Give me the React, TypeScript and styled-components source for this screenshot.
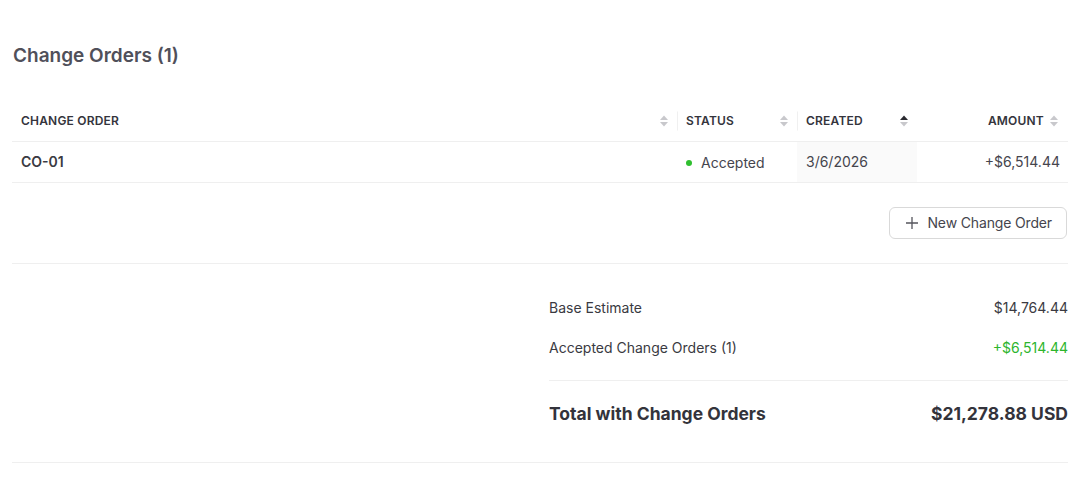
import styled, { createGlobalStyle } from "styled-components";

const GlobalStyle = createGlobalStyle`
  body {
    margin: 0;
    background: #ffffff;
    font-family: Inter, "Noto Sans", "Liberation Sans", sans-serif;
    color: #3a3a44;
  }
`;

const Page = styled.div`
  width: 1082px;
  box-sizing: border-box;
  padding: 42px 14px 0 12px;
`;

const Title = styled.h2`
  margin: 0 0 31px 1px;
  font-size: 19px;
  line-height: 28px;
  font-weight: 600;
  color: #50505a;
`;

const Table = styled.table`
  width: 100%;
  border-collapse: collapse;
  table-layout: fixed;
`;

const Th = styled.th<{ $w?: number; $right?: boolean; $sep?: boolean }>`
  position: relative;
  box-sizing: border-box;
  width: ${(p) => (p.$w ? `${p.$w}px` : "auto")};
  height: 40px;
  padding: 0 ${(p) => (p.$right ? 9 : 8)}px 0 9px;
  font-size: 12px;
  font-weight: 600;
  letter-spacing: 0.2px;
  text-transform: uppercase;
  color: #34343c;
  text-align: ${(p) => (p.$right ? "right" : "left")};
  border-bottom: 1px solid #efefef;
  &::before {
    content: "";
    display: ${(p) => (p.$sep ? "block" : "none")};
    position: absolute;
    left: 0;
    top: 50%;
    width: 1px;
    height: 19px;
    transform: translateY(-50%);
    background: #f0f0f0;
  }
`;

const HeadInner = styled.div<{ $right?: boolean }>`
  display: flex;
  align-items: center;
  justify-content: ${(p) => (p.$right ? "flex-end" : "space-between")};
  gap: 5px;
`;

const Td = styled.td<{ $right?: boolean; $sorted?: boolean; $bold?: boolean }>`
  box-sizing: border-box;
  height: 41px;
  padding: 0 8px 0 9px;
  font-size: 14px;
  font-weight: ${(p) => (p.$bold ? 600 : 400)};
  color: ${(p) => (p.$bold ? "#3a3a42" : "#45454d")};
  text-align: ${(p) => (p.$right ? "right" : "left")};
  background: ${(p) => (p.$sorted ? "#fafafa" : "transparent")};
  border-bottom: 1px solid #efefef;
`;

const Status = styled.span`
  display: inline-flex;
  align-items: center;
  gap: 9px;
  margin-top: 2px;
`;

const Dot = styled.span`
  width: 6px;
  height: 6px;
  border-radius: 50%;
  background: #2fbf2f;
`;

const ActionRow = styled.div`
  display: flex;
  justify-content: flex-end;
  padding: 24px 1px 24px 0;
  border-bottom: 1px solid #efefef;
`;

const Button = styled.button`
  display: inline-flex;
  align-items: center;
  gap: 8px;
  height: 32px;
  padding: 0 14px 0 15px;
  border: 1px solid #d9d9d9;
  border-radius: 6px;
  background: #fff;
  font-family: inherit;
  font-size: 14px;
  letter-spacing: -0.15px;
  color: #45454d;
`;

const Summary = styled.div`
  margin-left: 537px;
  padding: 34px 0 36px;
`;

const SummaryRow = styled.div<{ $green?: boolean }>`
  display: flex;
  justify-content: space-between;
  font-size: 14px;
  line-height: 20px;
  color: #3a3a42;
  & + & {
    margin-top: 20px;
  }
  span:last-child {
    color: ${(p) => (p.$green ? "#2db52d" : "#3a3a42")};
  }
`;

const SummaryDivider = styled.div`
  height: 1px;
  background: #efefef;
  margin: 22px 0 21px;
`;

const TotalRow = styled.div`
  display: flex;
  justify-content: space-between;
  font-size: 17.5px;
  line-height: 24px;
  font-weight: 700;
  color: #33333b;
`;

const BottomLine = styled.div`
  height: 1px;
  background: #efefef;
`;

function SortIcon({ active }: { active?: "up" | "down" }) {
  const off = "#c8c8cc";
  const on = "#2a2a30";
  return (
    <svg width="10" height="14" viewBox="0 0 10 14">
      <path d="M5 1.5 L9 6 L1 6 Z" fill={active === "up" ? on : off} />
      <path d="M5 12.5 L9 8 L1 8 Z" fill={active === "down" ? on : off} />
    </svg>
  );
}

export default function App() {
  return (
    <Page>
      <GlobalStyle />
      <Title>Change Orders (1)</Title>
      <Table>
        <thead>
          <tr>
            <Th>
              <HeadInner>
                <span>Change Order</span>
                <SortIcon />
              </HeadInner>
            </Th>
            <Th $w={120} $sep>
              <HeadInner>
                <span>Status</span>
                <SortIcon />
              </HeadInner>
            </Th>
            <Th $w={120} $sep>
              <HeadInner>
                <span>Created</span>
                <SortIcon active="up" />
              </HeadInner>
            </Th>
            <Th $w={151} $right>
              <HeadInner $right>
                <span>Amount</span>
                <SortIcon />
              </HeadInner>
            </Th>
          </tr>
        </thead>
        <tbody>
          <tr>
            <Td $bold>CO-01</Td>
            <Td>
              <Status>
                <Dot />
                Accepted
              </Status>
            </Td>
            <Td $sorted>3/6/2026</Td>
            <Td $right>+$6,514.44</Td>
          </tr>
        </tbody>
      </Table>
      <ActionRow>
        <Button>
          <svg width="14" height="14" viewBox="0 0 14 14">
            <path d="M7 1 V13 M1 7 H13" stroke="#55555c" strokeWidth="1.3" />
          </svg>
          New Change Order
        </Button>
      </ActionRow>
      <Summary>
        <SummaryRow>
          <span>Base Estimate</span>
          <span>$14,764.44</span>
        </SummaryRow>
        <SummaryRow $green>
          <span>Accepted Change Orders (1)</span>
          <span>+$6,514.44</span>
        </SummaryRow>
        <SummaryDivider />
        <TotalRow>
          <span>Total with Change Orders</span>
          <span>$21,278.88 USD</span>
        </TotalRow>
      </Summary>
      <BottomLine />
    </Page>
  );
}
